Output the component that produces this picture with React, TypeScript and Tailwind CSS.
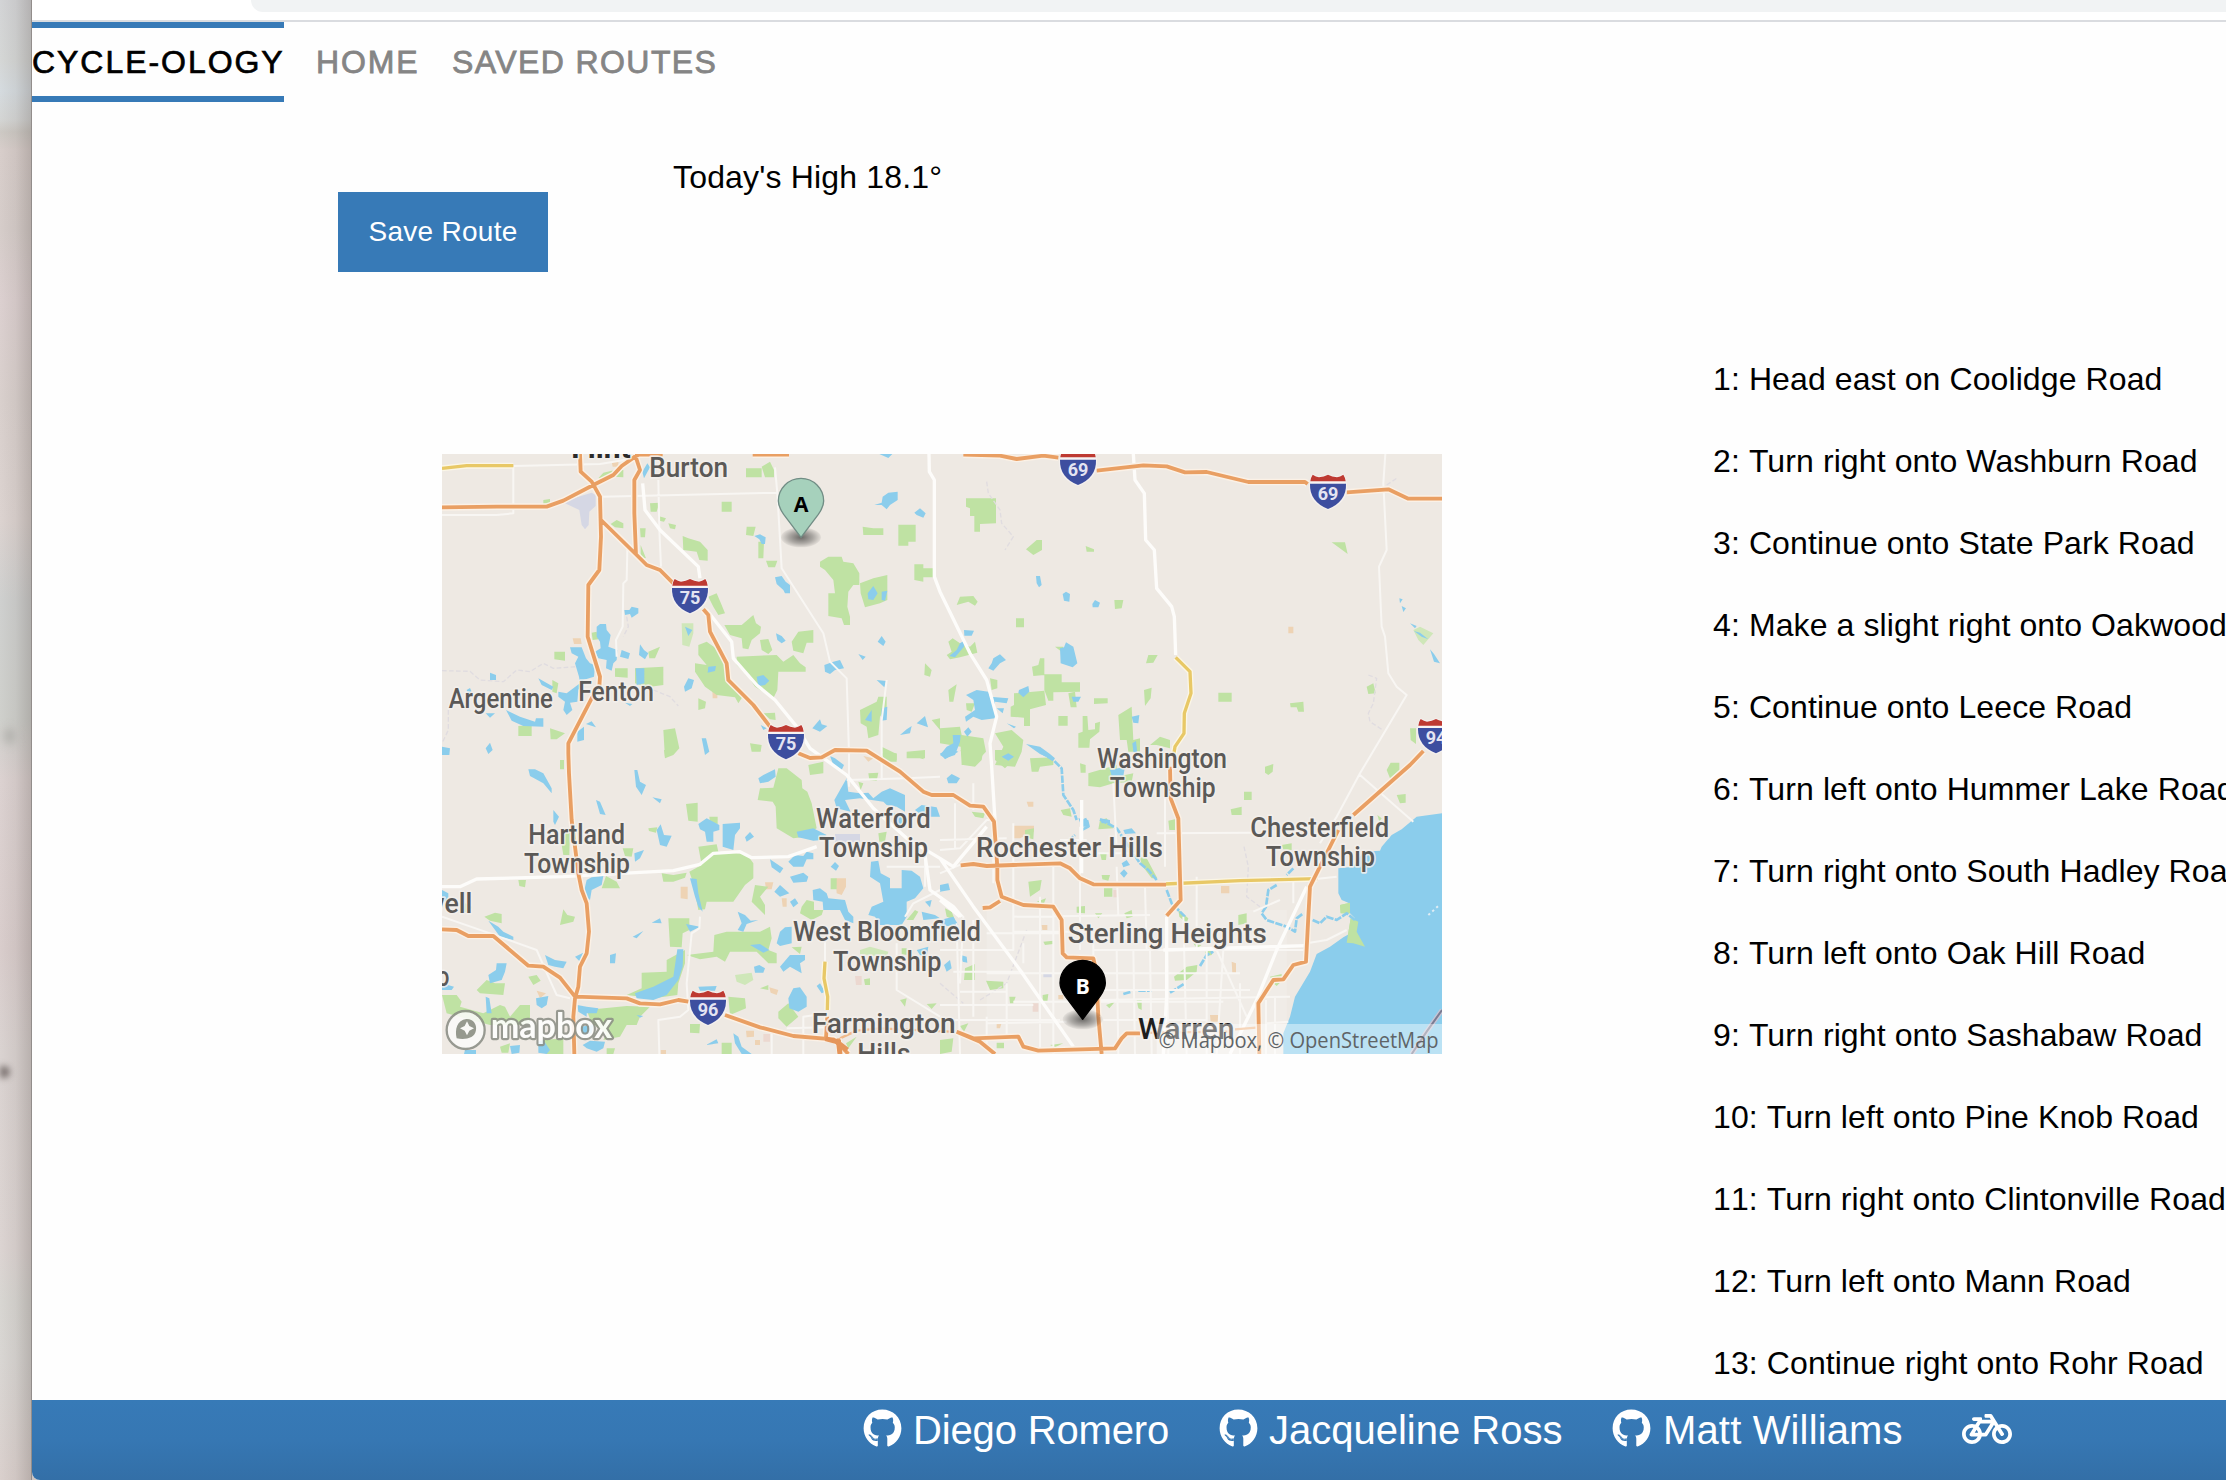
import React from "react";
import { FaBicycle, FaGithub } from "react-icons/fa";

const steps = [
  "Head east on Coolidge Road",
  "Turn right onto Washburn Road",
  "Continue onto State Park Road",
  "Make a slight right onto Oakwood Road",
  "Continue onto Leece Road",
  "Turn left onto Hummer Lake Road",
  "Turn right onto South Hadley Road",
  "Turn left onto Oak Hill Road",
  "Turn right onto Sashabaw Road",
  "Turn left onto Pine Knob Road",
  "Turn right onto Clintonville Road",
  "Turn left onto Mann Road",
  "Continue right onto Rohr Road",
];

/* Map shapes, stored per quadrant of the 3000 x 1800 map canvas. */
const parksNW = `M918 55H965V82H918ZM965 50L990 35L1002 60V82H975ZM845 155H875V185H845ZM630 160L658 158L650 185H632ZM920 230H947L940 258L918 255ZM955 275H972L970 325H955ZM978 332H1012L1005 352H985ZM1268 230L1300 235H1330V255H1270ZM1375 224H1427V275H1405V287H1375ZM1423 343H1450V355H1487V382H1450V395L1423 390Z
M1140 335L1165 320H1205L1210 335L1240 340L1258 370V405H1240L1225 425L1222 470L1230 500V525H1212L1205 505L1165 498V430H1185L1180 390L1155 360L1140 350ZM1260 400L1300 385L1342 375V450L1320 460L1275 472L1262 430ZM728 258L745 265L780 275L803 300V332L778 330L770 305L730 300ZM512 222L530 210L550 220V235L525 232ZM600 235H617L615 262H602ZM602 285L618 325L602 322ZM655 198L678 205L672 215L658 212ZM685 220L708 225L705 238L690 235ZM475 85L490 68L515 62L550 60V82L520 80ZM310 150L330 147V158L310 162Z
M805 440L830 430L845 465L855 490L835 495L820 470ZM853 525H905L940 495L948 520L963 530L960 550L935 570L925 598L908 595L905 565L870 555ZM960 570L985 567L997 600L985 612L965 600ZM1055 575L1075 545L1120 540V578H1100L1090 610L1060 602ZM890 620L1010 615L1030 635L1060 615L1080 640L1097 652V665H1015L1012 720L1000 745L945 710L925 680L890 645ZM775 585L800 575L835 600L850 640L870 690L905 730L908 740L895 760L885 742L830 735L795 710L765 665V640L800 645L775 615ZM585 655L670 650V705L620 712L585 700ZM525 655H563V683L525 680ZM625 605L660 590L645 625H628ZM343 605H375V632L343 628ZM337 690L355 700L350 730L337 725ZM235 828L275 825V858H235ZM330 835L375 850L350 868H332ZM670 840L705 835L718 895L700 915L675 925ZM775 745L798 755L795 775L775 780ZM970 790L1005 788L1007 810L990 808ZM1455 640L1475 660L1470 680L1453 675ZM1260 780L1310 755L1315 740H1340V770L1320 800L1315 855L1285 865L1280 830L1262 820ZM1475 810L1500 805V840ZM930 880L965 885L962 905H935ZM455 548L470 545L475 568L458 570ZM1325 890L1370 912V935H1330ZM1400 905L1455 900L1455 925H1400Z`;

const waterNW = `M1303 165L1325 158L1328 140L1345 128L1373 125V150L1350 165L1340 178L1325 165ZM1423 188L1440 175L1457 190L1450 203L1430 195ZM943 258L960 253L977 262L975 282H965L958 268ZM1005 382L1025 378L1037 395L1050 405V430H1035L1030 420L1010 402ZM1283 430L1300 408L1313 430L1300 450L1285 448ZM1325 425L1342 422L1335 452L1325 450ZM553 480H568L575 470L595 475V490L575 503L570 492L555 495ZM470 530L480 522H498L500 540L512 555L505 590L532 600L530 630L520 640L515 662L498 655L500 630L475 625L465 605L482 595L480 575L470 560Z
M390 592L425 592L438 625L450 640L465 645L462 680L430 690L415 720L412 755L390 758L397 780L380 795L370 780L375 755L355 740V725L380 730L420 700L417 680L405 640L415 620L395 610ZM295 685L340 710L335 720L305 705ZM198 780L240 800L285 815L288 805H310V830L250 828L215 812ZM545 600L570 610L565 627L540 620ZM600 583L612 600L625 610L615 628L597 615ZM587 655H613V700L590 705ZM732 710L745 685L762 690L755 715L735 725ZM805 650L828 648L825 663L803 668ZM950 680L970 675L988 692L975 705L955 708ZM1008 550L1025 558L1037 572L1025 580L1012 570ZM1313 575L1325 558L1337 575L1330 588ZM1153 645L1180 635L1200 630L1212 655L1185 660L1170 672L1155 665ZM1255 612L1277 620L1268 630ZM1310 690L1338 693L1333 712ZM1117 835L1140 808L1145 823L1162 828L1140 845ZM1380 855L1400 838L1415 828L1410 850ZM1430 820L1455 798L1464 832ZM1325 775L1342 770L1340 810L1323 812ZM1275 810L1295 780V815ZM785 865H798L808 905L795 915ZM150 668L168 675V690H150ZM412 845L432 830V870L412 875ZM438 822L455 814L468 832ZM137 895L150 878L158 900L145 912ZM6 890L30 895L28 915H6ZM735 530L757 540L745 558ZM80 720L90 714L95 725L85 732ZM137 790H165L150 803ZM607 65L622 40L630 52L612 85ZM1318 12H1357L1345 24ZM962 825L980 835L970 840ZM555 758L577 762L570 768Z`;

const parksNE = `M78 145H168V220L120 222V245H103V198H90V175L78 170ZM258 298L290 270H306V300L280 315ZM437 288L462 298V305L440 305ZM1175 277H1215L1223 312ZM50 465L60 440L100 438L113 455L105 467L85 455ZM523 450H550L545 475L525 477ZM228 505H252V532H228ZM618 640L625 615H653L640 638ZM25 575L38 565L60 580L90 590L105 575L112 608L60 622L30 628L20 615L35 605ZM345 590H370L365 605ZM276 650L295 645L300 625H313V675L280 678ZM313 673H365V697H420V725L340 727V752H325L313 720ZM222 730L313 722L318 765L270 778V828H252V803L212 800V770L222 765ZM385 730L405 725L410 772H392ZM355 798H383V827H355ZM462 745H503V760L462 762ZM612 720L635 713L632 745L615 768ZM835 728H875V755H835ZM1050 760L1090 755L1092 785H1075L1070 772H1052ZM1280 710L1300 700L1307 730L1285 732ZM1410 835H1428V882L1412 870ZM428 798H442L445 840L465 838V820L480 815L478 845L450 868L448 893H415V850L428 845ZM535 795L575 770L580 870L600 865V905L565 905L560 870H540ZM630 885L660 860L690 870V895L650 885ZM0 835L60 830L65 855L130 865L138 905L100 945L65 945L62 890L0 880ZM165 850L215 840L250 870L245 905L225 950L165 945L190 890ZM25 720L50 703L40 755L28 755ZM150 685L172 690V715L155 720ZM78 760L105 760L95 785L80 780Z`;

const waterNE = `M288 378H300L305 405L297 412L290 400ZM368 432L378 425L390 432L388 455L372 452ZM457 462L465 450L480 458L475 472L458 472ZM360 595L372 592L378 577L400 590L412 640L398 652L362 640ZM145 655L155 640L160 625L180 613L198 630L180 640L160 662ZM72 540L102 542L95 557H73ZM28 618L50 600L60 580L72 572V590L45 622ZM78 735L110 720L145 725L150 740L205 745L200 760L165 755V805L125 810L100 800L78 815L75 800L105 780L100 750ZM237 720L265 708L268 725L250 742L235 728ZM395 740L423 740L415 755H400ZM575 800L598 795L595 820L580 818ZM0 915L20 890L40 880L38 855L62 855L60 875L45 915L15 925ZM72 845L85 832L95 845L82 860ZM258 882L300 890L330 912L345 925L340 930L300 912ZM577 880L588 873L592 910L580 905ZM1378 445L1388 448L1380 460ZM1385 468L1398 475L1390 486ZM1470 598L1482 612L1500 640L1482 635ZM1410 520L1430 528L1425 535ZM1422 543L1440 548L1465 568L1445 560ZM170 775H192L188 790ZM200 820L228 830L222 835ZM185 920L205 910L222 920L205 932Z`;

const parksSW = `M1015 55H1040L1085 90L1087 115L1102 125L1115 160L1130 235L1085 262L1060 265L1010 235L1007 170L998 155L953 150L960 115L1000 113ZM1105 45L1150 35V70L1110 75ZM1285 70L1315 68L1310 92L1288 90ZM738 162L773 158V215L745 212ZM775 290L830 283L835 305L920 312L940 340V385L915 405L880 455L800 455L795 478L775 480L760 400L748 365L785 345ZM548 295L580 295L575 320L555 318ZM365 285L378 245L390 230L388 315L370 315ZM485 415L498 378L530 395L540 415ZM360 525L370 478L382 495L405 500L400 515ZM133 500L165 488L185 492V520L150 512ZM235 390H258L255 412L238 408ZM665 370L700 375L740 368L735 383L700 395L670 395ZM685 505H748V540L728 550L725 592L690 590ZM740 615L820 605L823 555L860 545H960L990 530L995 565L985 600L1010 610V640L985 640L950 605H870L855 635L830 620L780 628ZM605 668L680 665V630L735 600V640L715 700L712 735L640 745L560 735L605 715ZM110 720L140 690L165 700L195 700L190 735L120 730ZM6 735L50 735L65 755L60 770L130 790L180 765L195 770L210 800L240 765L270 765V820L240 825H150L20 790ZM440 780L560 768L630 770L600 800L590 825L560 825L540 860L490 870L500 850L455 820ZM265 680L290 675L302 692L280 705ZM1015 785L1045 760L1075 800L1040 830L1015 805ZM865 740L915 745L918 775L870 795ZM750 822H780L778 850L750 848ZM845 878H875V912H845ZM1080 490L1085 470L1100 450L1122 455V480L1150 480L1145 495L1115 510ZM945 405L985 410L960 440L975 465V495L935 455ZM960 715L985 705V720ZM1055 592L1085 590L1080 612ZM310 870L370 865V912H320ZM500 895H525L520 912H500ZM1218 880L1250 860L1225 895ZM1380 750L1400 745L1395 770ZM1460 762L1490 760L1475 777ZM1272 688L1290 685V705H1275ZM672 0H710L675 25ZM360 30H372V58H360ZM1325 10H1370V30L1330 28ZM1400 10H1455L1450 28ZM1315 250L1340 245L1335 275H1318ZM1172 385L1190 385V418H1172ZM625 235L652 232L648 248L627 243ZM808 200L833 200V222L810 218ZM75 460L95 470L90 488L72 485ZM180 890L210 880L205 908L185 908ZM1385 595L1400 595V615L1385 612ZM1400 510L1425 480L1435 485L1420 510ZM1255 95L1270 100L1262 120Z`;

const waterSW = `M265 58H285L310 70L335 115V130L310 100L270 78ZM583 60H592L600 95L618 105L605 135L588 110ZM468 150L480 155L497 195L480 192ZM637 142L665 148L660 160ZM340 180L357 200L345 225L340 215ZM650 240L662 223L672 255L695 257L680 290L660 285ZM775 222L800 205L838 225V240L820 245V275L800 275L795 245L780 238ZM848 222L900 218V235L885 255L880 300L848 290ZM915 262L930 246L942 260L920 275ZM583 310L612 300L600 325L585 335ZM955 85L970 75L1005 58L1007 80L985 95L960 100ZM1170 18L1185 25L1212 45L1205 60L1180 45ZM1183 150L1200 120L1220 85L1225 125L1260 130L1285 128L1300 145L1325 125L1350 115L1395 135V185L1370 170L1340 165L1330 155L1260 145L1215 150L1232 185L1190 175ZM1070 245L1120 235L1160 255L1145 270L1120 272L1075 262ZM1425 180L1445 165L1490 172L1500 200L1450 200ZM1360 190L1390 195L1400 215L1370 230ZM1045 335L1065 315L1090 318L1100 305L1120 310V328H1100L1090 350H1060ZM990 328L1030 355L1020 370L995 352ZM1050 380L1090 368L1105 380L1100 395L1060 398ZM1172 350L1185 336L1197 348L1188 362ZM1003 425L1020 405L1048 430L1020 440ZM1050 455L1065 445L1075 460L1060 472ZM750 385L770 387L775 430L788 485L775 470L765 440ZM433 420L440 390L455 382L490 378L485 405L455 420L450 450L438 440ZM145 512L175 530L190 545L220 560V570L180 560ZM893 485L915 495L932 512L955 510L920 522L910 545L893 540L905 520ZM1010 580L1020 545L1035 532L1055 530V580L1020 588ZM738 522L780 530L750 545ZM578 560L610 543L590 565ZM1118 420L1140 415L1160 430L1165 445L1215 450L1225 485L1240 500V520L1215 510L1200 480L1150 480L1148 455L1120 450ZM1293 335L1315 332L1322 370L1350 385V415L1385 415L1385 360L1415 362L1440 380L1450 415L1425 445L1400 455V500L1385 525H1320L1305 500L1285 495L1295 470L1330 455L1320 400L1290 380ZM1445 485L1485 495L1500 505L1450 510ZM1455 455L1475 450L1470 472ZM930 585L960 582L988 600L970 608ZM1020 650L1050 615L1095 615V630L1080 640L1085 670L1050 650L1030 665ZM942 650L958 645L975 655L970 668H945ZM585 730L640 710L700 680L712 598H730L728 650L715 690L680 735L640 750L590 745ZM315 615L345 630L380 635L370 655L345 650L325 645ZM405 620L430 608L420 635ZM145 675L168 660L170 640L200 640L195 665L185 690L150 700ZM288 745L325 738L320 765L305 775L290 765ZM1045 745L1060 715L1080 712L1100 740L1100 770L1075 785L1048 775ZM1130 708L1140 700L1155 725L1145 730ZM412 765L440 770L475 775L470 790L440 790V800L415 785ZM428 885L450 872L495 875L490 895L470 905L440 895ZM295 875L310 870L330 900L320 912L295 908ZM880 850L895 860L905 890L935 912H905L885 880ZM798 885L830 868L835 880ZM510 615L528 610L525 640L510 640ZM137 740L148 745L155 790L140 790ZM6 700L42 710L35 720H6ZM6 420L25 430V460L6 450ZM635 518L660 505L665 520ZM210 888L240 885L238 908L215 912ZM75 900H108V912H72ZM1430 600L1465 590L1460 620L1440 615ZM775 710L830 708L825 722H780ZM420 830L460 825L455 850L430 855ZM590 795L610 798L600 803Z`;

const sea = `M1506 190L1430 200L1385 238L1355 255L1325 290L1320 302L1270 305L1240 350L1195 355L1195 430L1205 450L1228 460L1230 490L1245 505L1240 545L1210 562L1170 590L1130 612L1110 665L1065 740L1050 800L1030 850V912H1506Z`;

const parksSE = `M62 0H130L125 30L105 50L70 45ZM165 0H225L205 45L195 55L165 30ZM270 25L340 22V45L300 50L295 65L275 65ZM445 70L530 45L530 80L580 70L575 95L520 100L480 112L445 108ZM975 50L1000 42L998 65L985 75L975 68ZM912 125H935V150H912ZM872 178L905 170V195L875 195ZM1370 135L1397 132V158L1380 160ZM1340 60L1352 38L1378 38V60L1350 85ZM685 212L705 208V240L688 240ZM362 180L390 175L395 200L370 195ZM480 210L500 205L520 235L475 238ZM265 395L305 390L300 420L270 440ZM492 415L517 415V440H492ZM410 470L435 468V490L410 488ZM553 490L575 480L578 500L560 505ZM465 490L487 490L475 505ZM1025 285L1055 280V300L1030 298ZM1200 465L1230 458V490L1202 490ZM1232 505L1255 515L1250 545L1275 590L1240 580L1220 578ZM702 680L740 650L772 645L770 665L740 690L705 692ZM75 655L105 642V690H72ZM138 692L190 695V715L150 720ZM208 740H227L220 760H210ZM498 765L525 755L508 775ZM308 735L325 732L322 755L308 755ZM170 878H192V895H170ZM990 680L1025 672V685L1000 695ZM995 695L1020 698L1010 708ZM95 185L135 190L130 205L105 200ZM255 240L282 235L280 268L255 262ZM600 320L620 325L652 385H635L605 345ZM895 495L920 490V520L895 525ZM590 750H605V780L595 775ZM715 480L745 505L740 520L718 500ZM760 580L785 585L770 595ZM795 605L820 600L815 615L800 618ZM15 475L35 485L45 510L20 500ZM310 575L340 572V582L315 585ZM330 885L370 880L345 892ZM0 870L40 865L35 905L0 912ZM420 40L437 45V68L422 68ZM485 375L510 375L505 392L487 388ZM290 455L318 445L312 460ZM1312 195L1325 205L1318 215ZM60 828L85 820L72 845ZM480 310L500 308L498 330L485 330Z`;

const waterSE = `M510 60L555 50L550 78H515ZM20 85L35 72L60 85L50 100H25ZM415 205L445 210L450 230H425ZM480 205L510 210V220H485ZM550 240L575 235L588 250L555 252ZM545 340L560 330L570 345L550 352ZM540 370L552 358L563 370L552 383ZM0 405L25 400L30 420L0 425ZM62 615L80 620L82 638L68 635ZM12 645L30 630L35 655L20 665ZM0 510L40 500L55 525L0 530ZM0 10L40 0L55 5L15 28Z`;

const minorRoads = `M220 50V190L170 195H6M222 48L480 42L585 25M484 140L1010 128M1005 52L1012 130L1025 355L1150 550L1170 635L1220 685L1227 910V1010M655 90L658 240L663 350M562 300L560 390L550 400L548 530L528 570L530 620M1340 690L1325 812V990M1220 990L1400 985L1500 980M780 1400L778 1435L755 1450L740 1600L745 1680L720 1700L655 1710L658 1812M6 1400L150 1450L290 1500L325 1580L350 1635L390 1645M1340 1250H1500M1455 1215L1455 1310M1500 1320L1420 1360L1395 1400M1155 1470V1540M1370 1480V1620L1500 1700M1160 1690L1090 1700V1812M995 1750V1812M1040 1735L1160 1732
M2836 12L2830 100L2840 300L2817 350L2825 530L2835 560L2845 670L2870 710L2900 735L2760 970L2690 1100L2640 1180M2760 975L2920 1115M2150 1150L2440 1148M2270 1280V1500M1720 1120V1500L1500 1500M1500 1200L1560 1195L1640 1110L1660 1110M1500 1270L1570 1240M1500 1170L1700 1165M1660 1150V1300M1840 1250V1500M1720 1400L2130 1395M1720 1445H2130M1800 1340V1600M2030 1250L2035 1400M2115 1310L2120 1500M1600 1410V1700M1550 1420L1560 1812M1500 1340L1570 1400L1560 1600M1640 1570H1960M1540 1565H1750M1560 1625H1700M1720 1655H2350M1640 1780V1700M1960 1500H2600M2230 1400L2240 1812M2300 1500V1812M2350 1500L2330 1812M2400 1600V1812M2180 1400L2185 1812M2130 1500L2135 1812M2080 1500L2085 1812M2030 1500L2035 1812M1980 1570H2400M1980 1620H2430M1980 1650L2550 1640M1990 1710H2300M1500 1710H1860M1500 1665H1780M2330 1500L2420 1700M2478 1650V1812M2505 1640V1812M2480 1720L2545 1715M2440 1385L2520 1350M2560 1290V1360M2600 1290L2690 1280M2600 1480L2660 1470L2720 1440M1800 1410V1812M1840 1500V1812M1700 1600V1760M1750 1480V1540M1640 1720L1880 1715M1920 1130V1500M1860 1170H1940M1860 1210H2150M2020 1000L2030 1200M2175 1040V1250M1960 1440V1520M1640 1450H1860M1545 1060V1200M1600 1000V1080`;

const mainRoads = `M608 100L615 180L660 240L775 350L780 385M800 480L875 575L880 625L950 705L1005 750L1070 830L1110 895L1220 975L1300 1075L1400 1165L1500 1225L1600 1370L1740 1560L1900 1790M1455 1215L1470 1320L1540 1370L1565 1400M1467 12L1468 65L1483 90V380L1500 425L1590 610L1640 690L1670 800L1650 880L1655 950L1665 1110M2080 12L2085 90L2113 130L2117 270L2143 300L2150 415L2195 470L2203 500L2207 615M6 1310H60L110 1287L370 1280L600 1267L700 1262L780 1243L820 1210L900 1205L935 1223L1045 1220L1130 1190M1500 1225L1540 1250L1640 1130M2180 1400V1640L2170 1812M2170 1500L2600 1487M2600 1310L2510 1500L2450 1650L2370 1812M1925 1050V1270M1500 1350L1560 1400`;

const freeways = `M6 172L170 170L320 170L370 152L460 105L520 75L545 48L585 20L600 12M420 12L422 65L455 95L480 140L483 260L478 360L445 405L443 560L480 680L478 710L455 745L385 880V910L387 970L395 1110L415 1270L425 1320L440 1360L447 1445L440 1510L420 1550L415 1610L405 1645L400 1700L403 1812M483 210L590 315L620 345L660 360L700 400M790 478L805 495L810 545L860 640L865 690L940 765L990 830M1075 910L1110 924L1145 922L1185 900L1280 902L1380 965L1450 1025L1475 1035H1540L1590 1067L1630 1070L1662 1115L1672 1250V1290L1685 1340L1750 1365L1840 1370L1865 1410L1868 1510L1880 1522L1960 1525L1968 1560L1975 1700L1985 1812M585 14L600 60L583 90V190L588 315M6 1438L50 1440L85 1458H160L265 1547L310 1550L360 1583L405 1640L560 1645L600 1660L660 1663L715 1650L745 1655M855 1695L960 1732L1060 1758L1180 1768L1200 1785L1225 1812M1195 1765L1200 1812M1550 1745L1600 1765L1735 1760L1750 1790L1795 1802L2025 1795L2045 1765L2060 1750H2100M1550 1745L1620 1775L1665 1812M585 14H668M938 14H1047M1570 14L1680 17L1730 27L1810 17L1855 23M1970 62L2110 46L2180 49L2235 67L2300 66L2425 96H2595L2603 102M2720 127L2845 118L2905 146H3006M1562 1246L1600 1242L1640 1248L1720 1245L1860 1240L1890 1255L1920 1285L1960 1303L2178 1304M2190 950L2192 1045L2215 1105L2222 1350L2180 1397M2950 903L2910 945L2740 1095M2695 1140L2610 1310L2605 1400L2598 1535L2560 1545L2530 1588L2500 1590L2455 1660L2458 1812M1628 1374L1650 1372L1680 1353M1162 1700L1158 1765`;

const highways = `M6 55L80 47H220M2207 622L2250 665L2253 730L2233 790L2232 850L2205 890L2200 920M2175 1302L2400 1292L2632 1286M1155 1535L1152 1585L1163 1640L1162 1680`;

const creeks = `M1800 905L1840 930L1865 955L1870 1035L1900 1080L1910 1110M1935 1105L1945 1130L1925 1140M1980 1108L2030 1135L2100 1240L2125 1260L2150 1290M2180 1320L2195 1360L2235 1400M2510 1305L2485 1320L2478 1370L2465 1390L2480 1410L2540 1430L2565 1445L2570 1405L2590 1390M2618 1410L2640 1420L2660 1400L2690 1410L2720 1390L2745 1410M2190 1628L2235 1600M2050 1632L2075 1625M2095 1622H2135M2280 1548L2300 1515L2320 1505M2560 1255L2540 1275M1885 1175L1905 1155`;

const towns = `M398 565H422L425 582H402ZM1187 1285H1218V1310L1205 1335L1190 1330ZM722 1310H743V1348L722 1345ZM975 1297H1000L995 1318H978ZM1025 1345H1040V1370H1028ZM988 1612L1015 1620L1010 1635L992 1628ZM290 1622L318 1630L300 1645ZM918 1742H942V1760L920 1762ZM945 1770H960V1785H945ZM1718 1127H1782V1145L1740 1165H1722ZM1760 1055L1780 1055V1070H1765ZM2343 1308H2368V1330H2343ZM2375 1535L2388 1540V1570H2377ZM2310 1695H2335V1715H2312ZM2545 530H2560V550H2545ZM817 720H832V745H818ZM1855 1635H1870V1648H1855ZM1805 1425L1822 1425V1440H1807ZM515 35H535V50H518ZM1670 1718H1685L1680 1735H1670ZM1270 918L1300 925L1285 935ZM662 1800H678V1812H662Z`;

type Label = [text: string, x: number, y: number, width: number];

const labels: Label[] = [
  ["Burton", 628, 82, 236],
  ["Argentine", 26, 773, 313],
  ["Fenton", 415, 754, 227],
  ["Hartland", 265, 1181, 290],
  ["Township", 252, 1268, 318],
  ["Waterford", 1128, 1134, 344],
  ["Township", 1137, 1222, 327],
  ["Washington", 1971, 953, 390],
  ["Township", 2009, 1042, 318],
  ["Chesterfield", 2431, 1161, 417],
  ["Township", 2477, 1248, 328],
  ["Rochester Hills", 1608, 1220, 561],
  ["West Bloomfield", 1059, 1474, 564],
  ["Township", 1179, 1562, 325],
  ["Sterling Heights", 1883, 1480, 597],
  ["Farmington", 1115, 1750, 432],
  ["Hills", 1252, 1840, 160],
  ["well", -46, 1388, 143],
  ["o", -10, 1607, 38],
];

function Shield({ x, y, label }: { x: number; y: number; label: string }) {
  return (
    <g transform={`translate(${x} ${y})`}>
      <path
        d="M-46 0Q-36 6 -27 7Q-12 6 0 0Q12 6 27 7Q36 6 46 0Q58 22 54 48Q50 85 0 104Q-50 85 -54 48Q-58 22 -46 0Z"
        fill="#f7f3f3"
        stroke="#f4f0ee"
        strokeWidth="5"
      />
      <path d="M-46 0Q-36 7 -27 8Q-12 7 0 0Q12 7 27 8Q36 7 46 0Q52 9 53 20H-53Q-52 9 -46 0Z" fill="#be3a32" />
      <path d="M-54 27H54Q56 80 0 103Q-56 80 -54 27Z" fill="#3d4e9f" />
      <text
        y="75"
        textAnchor="middle"
        fontFamily="Roboto, 'Liberation Sans', sans-serif"
        fontSize="54"
        fontWeight="700"
        fill="#e4e4f2"
      >
        {label}
      </text>
    </g>
  );
}

function Pin({ x, y, label, dark }: { x: number; y: number; label: string; dark?: boolean }) {
  return (
    <g transform={`translate(${x} ${y})`}>
      <ellipse cy="109" rx="60" ry="30" fill="url(#pinShadow)" />
      <path
        d="M0 109L-52 40C-62 26 -68 14 -68 0A68 68 0 0 1 68 0C68 14 62 26 52 40Z"
        fill={dark ? "#000000" : "#a6d1bc"}
        stroke={dark ? "#000000" : "#718d85"}
        strokeWidth="4"
        strokeLinejoin="round"
      />
      <text
        y="32"
        textAnchor="middle"
        fontFamily="'Open Sans', 'Noto Sans', sans-serif"
        fontSize="64"
        fontWeight="700"
        fill={dark ? "#ffffff" : "#000000"}
      >
        {label}
      </text>
    </g>
  );
}

function RouteMap() {
  return (
    <svg viewBox="6 12 3000 1800" className="block h-[600px] w-[1000px]" role="img" aria-label="Route map">
      <defs>
        <radialGradient id="pinShadow">
          <stop offset="0" stopColor="#000" stopOpacity="0.55" />
          <stop offset="0.6" stopColor="#000" stopOpacity="0.28" />
          <stop offset="1" stopColor="#000" stopOpacity="0.05" />
        </radialGradient>
      </defs>
      <rect x="6" y="12" width="3000" height="1800" fill="#eee9e3" />
      <rect x="1640" y="1380" width="900" height="440" fill="#f0ece7" />

      <path d="M375 160L400 145L455 128L467 135V168L448 185L446 225L435 238L425 225L418 180ZM1185 1152H1260V1175L1185 1178ZM1810 1572H1835V1582H1810Z" fill="#d5d7e4" />
      <path d={towns} fill="#eed3b4" />
      <path d="M1245 1578H1265V1605H1248ZM970 1752H990V1775H970ZM1778 1660H1795V1685H1778ZM2020 1320H2035V1342H2020Z" fill="#ecd8d0" />
      <g fill="#bfe2a3">
        <path d={parksNW} />
        <path d={parksNE} transform="translate(1500 0)" />
        <path d={parksSW} transform="translate(0 900)" />
        <path d={parksSE} transform="translate(1500 900)" />
      </g>
      <path d="M725 520H760V550L748 590L727 585ZM2920 540L2940 530L2980 550L2950 585L2935 570ZM885 1575L935 1568L940 1590L915 1605L890 1595ZM1260 1500L1290 1490L1345 1505L1340 1522L1260 1512Z" fill="#cfe7b9" />
      <g fill="#8bcdec">
        <path d={waterNW} />
        <path d={waterNE} transform="translate(1500 0)" />
        <path d={waterSW} transform="translate(0 900)" />
        <path d={waterSE} transform="translate(1500 900)" />
        <path d={sea} transform="translate(1500 900)" />
      </g>
      <path d="M2732 1405L2755 1415L2750 1445L2775 1490L2740 1480L2720 1478ZM2700 1365L2730 1358V1390L2702 1390Z" fill="#bfe2a3" />

      <g fill="none" strokeLinejoin="round">
        <path
          d="M6 662L90 664L120 690L190 695L230 660L270 665L310 640L340 655L410 650M560 500L565 530L550 560M640 720L690 740L715 768M25 780V840L6 880M1640 95L1645 130L1680 180L1685 220L1720 260L1695 300M2785 675L2810 685L2800 760L2785 790L2790 815L2825 838M2840 105L2870 85M1500 1600L1570 1660M1620 1650L1700 1600L1760 1440M2412 1190L2425 1250L2420 1340L2460 1370"
          stroke="#e0dce0"
          strokeWidth="4"
          strokeDasharray="14 7"
        />
        <path d={creeks} stroke="#8bcdec" strokeWidth="8" strokeDasharray="22 4" />
        <path d={minorRoads} stroke="#f8f6f3" strokeWidth="6" />
        <path d={mainRoads} stroke="#fdfcfa" strokeWidth="10" />
        <path d="M1200 1765L1250 1742L1320 1735L1530 1745M2120 1748L2370 1745M2385 1738L2448 1733" stroke="#f0b98a" strokeWidth="7" />
        <path d={highways} stroke="#fbf6e6" strokeWidth="18" />
        <path d={highways} stroke="#e8c866" strokeWidth="10" />
        <path d={freeways} stroke="#fbf1e6" strokeWidth="20" />
        <path d={freeways} stroke="#e99f63" strokeWidth="11.5" />
        <path d="M1156 1766L1190 1775L1222 1800M1195 1770L1200 1812" stroke="#e5955a" strokeWidth="15" />
        <path d="M3006 1680L2960 1745L2915 1812" stroke="#c6c5d6" strokeWidth="14" />
        <path d="M3006 1680L2960 1745L2915 1812" stroke="#7b7c92" strokeWidth="6" />
        <path d="M2965 1395L2995 1368" stroke="#e0edf4" strokeWidth="6" strokeDasharray="7 9" />
      </g>

      <Shield x={750} y={387} label="75" />
      <Shield x={1038} y={825} label="75" />
      <Shield x={1914} y={2} label="69" />
      <Shield x={2664} y={74} label="69" />
      <Shield x={2988} y={807} label="94" />
      <Shield x={804} y={1622} label="96" />

      <g
        fontFamily="Roboto, 'Liberation Sans', sans-serif"
        fontSize="81"
        fontWeight="500"
        fill="#5b5957"
        stroke="#f3f0ec"
        strokeOpacity="0.85"
        strokeWidth="10"
        strokeLinejoin="round"
        paintOrder="stroke"
      >
        {labels.map(([text, x, y, width]) => (
          <text key={`${text}-${x}`} x={x} y={y} textLength={width} lengthAdjust="spacingAndGlyphs">
            {text}
          </text>
        ))}
        <text x="394" y="24" textLength="178" lengthAdjust="spacingAndGlyphs" fontWeight="700" fill="#2a2a2a">
          Flint
        </text>
        <text x="2094" y="1768" textLength="290" lengthAdjust="spacingAndGlyphs" fontSize="86" fontWeight="500" fill="#1e1e1e">
          Warren
        </text>
      </g>

      <rect x="2150" y="1722" width="856" height="90" fill="#ffffff" fillOpacity="0.42" />
      <text
        x="2156"
        y="1793"
        textLength="840"
        lengthAdjust="spacingAndGlyphs"
        fontFamily="'Open Sans', 'Noto Sans', sans-serif"
        fontSize="66"
        fill="#5f6467"
      >
        © Mapbox, © OpenStreetMap
      </text>

      <Pin x={1083} y={153} label="A" />
      <Pin x={1928} y={1599} label="B" dark />

      <g opacity="0.88">
        <circle cx="77" cy="1740" r="57" fill="#fbfbf9" stroke="#8c8f86" strokeWidth="7" />
        <path d="M50 1765C44 1738 51 1710 79 1707C100 1706 111 1724 108 1740C105 1766 74 1770 50 1765Z" fill="#8a8f83" />
        <path d="M81 1714L88 1728L102 1735L88 1742L81 1756L74 1742L60 1735L74 1728Z" fill="#fbfbf9" />
        <text
          x="152"
          y="1765"
          textLength="364"
          lengthAdjust="spacingAndGlyphs"
          fontFamily="Lato, 'Open Sans', sans-serif"
          fontSize="104"
          fontWeight="700"
          fill="#ffffff"
          stroke="#8c8f86"
          strokeWidth="13"
          strokeLinejoin="round"
          paintOrder="stroke"
        >
          mapbox
        </text>
      </g>
    </svg>
  );
}

export default function App() {
  return (
    <div className="flex h-[1480px] w-[2226px] overflow-hidden bg-[#cdc5c2] font-['Liberation_Sans',Arial,sans-serif] text-black">
      <aside className="relative w-8 shrink-0 bg-[linear-gradient(180deg,#d3d4d6_0px,#d5d7d6_60px,#d5dbdf_90px,#d4d5d4_120px,#cdc9c4_132px,#d8cecb_150px,#d6cdca_230px,#dcd0d0_300px,#d9d0cd_400px,#dcd3d0_520px,#cfd0cf_600px,#cfd0cc_720px,#dcd2d1_780px,#d9cdcc_950px,#dad3d1_1050px,#dcd4d2_1250px,#d8d6d2_1300px,#d9d6d3_1360px,#dad0cd_1480px)]">
        <div className="absolute inset-0 border-r border-[#928d8b] bg-[linear-gradient(90deg,rgba(90,80,75,0)_0%,rgba(90,80,75,0.08)_50%,rgba(90,80,75,0.26)_100%)]" />
        <div className="absolute top-[1066px] left-0 h-3 w-2.5 rounded-r-full bg-[#7d7472] blur-[3px]" />
        <div className="absolute top-[728px] left-1 h-4 w-3 rounded-full bg-[#b4b3af] blur-[4px]" />
      </aside>

      <div className="flex min-w-0 flex-1 flex-col overflow-hidden rounded-bl-lg bg-[#fefefe]">
        <div className="h-[22px] shrink-0 border-b-2 border-[#dadce0] bg-white">
          <div className="ml-[219px] h-3 rounded-bl-[24px] bg-[#f1f3f4]" />
        </div>

        <nav className="flex h-20 shrink-0 text-[32px] leading-[62px] whitespace-nowrap text-[#858585]">
          <a className="w-[252px] border-y-[6px] border-[#377ab7] pt-[3px] tracking-[1.95px] text-black [-webkit-text-stroke:0.7px_black]">
            CYCLE-OLOGY
          </a>
          <a className="mt-[9px] ml-8 w-[104px] tracking-[1.9px] [-webkit-text-stroke:0.8px_#858585]">HOME</a>
          <a className="mt-[9px] ml-8 tracking-[1.42px] [-webkit-text-stroke:0.8px_#858585]">SAVED ROUTES</a>
        </nav>

        <main className="flex min-h-0 flex-1 overflow-hidden">
          <section className="w-[1681px] shrink-0">
            <div className="flex items-start">
              <button className="mt-[90px] ml-[306px] h-20 w-[210px] bg-[#377ab7] text-[28px] tracking-[0.28px] whitespace-nowrap text-white">
                Save Route
              </button>
              <p className="mt-[57px] ml-[125px] text-[32px] leading-9 tracking-[0.17px] whitespace-nowrap">
                Today's High 18.1°
              </p>
            </div>
            <div className="mt-[182px] ml-[410px]">
              <RouteMap />
            </div>
          </section>

          <ol className="mt-[236px] shrink-0">
            {steps.map((step, i) => (
              <li key={step} className="flex h-[82px] items-center text-[32px] leading-9 tracking-[0.1px] whitespace-pre">
                <span className="[font-kerning:none]">{i + 1}: </span>
                <span>{step}</span>
              </li>
            ))}
          </ol>
        </main>

        <footer className="flex h-20 shrink-0 items-start bg-linear-to-b from-[#377ab7] via-[#3677b3] to-[#336fa7] pl-[832px] text-[40px] leading-[46px] whitespace-nowrap text-white">
          <a className="flex w-[355px] pt-[7px] tracking-[-0.15px]">
            <FaGithub className="mt-0.5 mr-[11px] -ml-px size-[39px] shrink-0" />
            Diego Romero
          </a>
          <a className="flex w-[393px] pt-[7px]">
            <FaGithub className="mt-0.5 mr-[11px] size-[39px] shrink-0" />
            Jacqueline Ross
          </a>
          <a className="flex w-[350px] pt-[7px] tracking-[0.15px]">
            <FaGithub className="mt-0.5 mr-3 size-[39px] shrink-0" />
            Matt Williams
          </a>
          <FaBicycle className="mt-[9px] h-10 w-[50px]" />
        </footer>
      </div>
    </div>
  );
}
